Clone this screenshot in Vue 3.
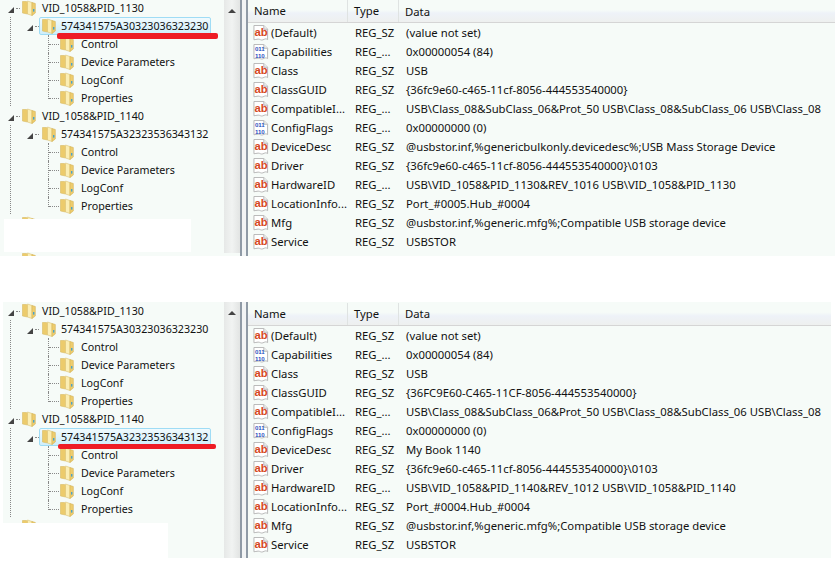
<script setup>
const panels = [
  {
    cls: 'first',
    tree: [
      { d: 0, t: 'VID_1058&PID_1130', arrow: true },
      { d: 1, t: '574341575A30323036323230', arrow: true, sel: true },
      { d: 2, t: 'Control' },
      { d: 2, t: 'Device Parameters' },
      { d: 2, t: 'LogConf' },
      { d: 2, t: 'Properties', last: true },
      { d: 0, t: 'VID_1058&PID_1140', arrow: true },
      { d: 1, t: '574341575A32323536343132', arrow: true },
      { d: 2, t: 'Control' },
      { d: 2, t: 'Device Parameters' },
      { d: 2, t: 'LogConf' },
      { d: 2, t: 'Properties', last: true },
      { d: 0, t: '' },
      { d: 0, t: '' },
      { d: 0, t: '' }
    ],
    rows: [
      ['ab', '(Default)', 'REG_SZ', '(value not set)'],
      ['bin', 'Capabilities', 'REG_...', '0x00000054 (84)'],
      ['ab', 'Class', 'REG_SZ', 'USB'],
      ['ab', 'ClassGUID', 'REG_SZ', '{36fc9e60-c465-11cf-8056-444553540000}'],
      ['ab', 'CompatibleI...', 'REG_...', 'USB\\Class_08&SubClass_06&Prot_50 USB\\Class_08&SubClass_06 USB\\Class_08'],
      ['bin', 'ConfigFlags', 'REG_...', '0x00000000 (0)'],
      ['ab', 'DeviceDesc', 'REG_SZ', '@usbstor.inf,%genericbulkonly.devicedesc%;USB Mass Storage Device'],
      ['ab', 'Driver', 'REG_SZ', '{36fc9e60-c465-11cf-8056-444553540000}\\0103'],
      ['ab', 'HardwareID', 'REG_...', 'USB\\VID_1058&PID_1130&REV_1016 USB\\VID_1058&PID_1130'],
      ['ab', 'LocationInfo...', 'REG_SZ', 'Port_#0005.Hub_#0004'],
      ['ab', 'Mfg', 'REG_SZ', '@usbstor.inf,%generic.mfg%;Compatible USB storage device'],
      ['ab', 'Service', 'REG_SZ', 'USBSTOR']
    ]
  },
  {
    cls: 'second',
    tree: [
      { d: 0, t: 'VID_1058&PID_1130', arrow: true },
      { d: 1, t: '574341575A30323036323230', arrow: true },
      { d: 2, t: 'Control' },
      { d: 2, t: 'Device Parameters' },
      { d: 2, t: 'LogConf' },
      { d: 2, t: 'Properties', last: true },
      { d: 0, t: 'VID_1058&PID_1140', arrow: true },
      { d: 1, t: '574341575A32323536343132', arrow: true, sel: true },
      { d: 2, t: 'Control' },
      { d: 2, t: 'Device Parameters' },
      { d: 2, t: 'LogConf' },
      { d: 2, t: 'Properties', last: true },
      { d: 0, t: '' }
    ],
    rows: [
      ['ab', '(Default)', 'REG_SZ', '(value not set)'],
      ['bin', 'Capabilities', 'REG_...', '0x00000054 (84)'],
      ['ab', 'Class', 'REG_SZ', 'USB'],
      ['ab', 'ClassGUID', 'REG_SZ', '{36FC9E60-C465-11CF-8056-444553540000}'],
      ['ab', 'CompatibleI...', 'REG_...', 'USB\\Class_08&SubClass_06&Prot_50 USB\\Class_08&SubClass_06 USB\\Class_08'],
      ['bin', 'ConfigFlags', 'REG_...', '0x00000000 (0)'],
      ['ab', 'DeviceDesc', 'REG_SZ', 'My Book 1140'],
      ['ab', 'Driver', 'REG_SZ', '{36fc9e60-c465-11cf-8056-444553540000}\\0103'],
      ['ab', 'HardwareID', 'REG_...', 'USB\\VID_1058&PID_1140&REV_1012 USB\\VID_1058&PID_1140'],
      ['ab', 'LocationInfo...', 'REG_SZ', 'Port_#0004.Hub_#0004'],
      ['ab', 'Mfg', 'REG_SZ', '@usbstor.inf,%generic.mfg%;Compatible USB storage device'],
      ['ab', 'Service', 'REG_SZ', 'USBSTOR']
    ]
  }
]
</script>

<template>
  <div class="page">
    <section v-for="p in panels" :key="p.cls" class="panel" :class="p.cls">
      <div class="tree">
        <div v-for="(n, i) in p.tree" :key="i" class="node" :class="['d' + n.d, { last: n.last }]">
          <span v-if="n.arrow" class="arrow"></span>
          <span class="item" :class="{ sel: n.sel }">
            <svg class="folder" width="14" height="16" viewBox="0 0 14 16">
              <path d="M.5 1.500h4l1 1v11.500l-5-1z" fill="#eccb6c" stroke="#d8bb63" stroke-width=".6" />
              <path d="M5.500 1 10 2.500v13l-4.500-1.500z" fill="#fbeeb4" stroke="#dcc170" stroke-width=".6" />
              <path d="M10 2.500l3.300 1v9.500l-3.300 2.500z" fill="#eecd6e" stroke="#d3b254" stroke-width=".6" />
              <rect x="11" y="9" width="1.400" height="2.600" fill="#46a3cc" />
            </svg>
            <span class="label">{{ n.t }}</span>
          </span>
          <i v-if="n.sel" class="redline"></i>
        </div>
        <div class="blank"></div>
      </div>
      <div class="scroll"><span class="up"></span></div>
      <div class="split"></div>
      <div class="list">
        <div class="head">
          <span class="c1">Name</span><span class="c2">Type</span><span class="c3">Data</span>
        </div>
        <div v-for="r in p.rows" :key="r[1]" class="row">
          <svg class="regicon" width="16" height="16" viewBox="0 0 16 17">
            <path d="M.5.5h10.500l4 4v11c-2-1.500-3-.5-5 .3-2 .7-3-.8-5-.8-2 0-3 .7-4.500 .7z" fill="#fff" stroke="#b4b4b4" />
            <path d="M11 .5v4h4" fill="#eee" stroke="#b4b4b4" />
            <text v-if="r[0] === 'ab'" x="1" y="11.500" class="abt">ab</text>
            <template v-else>
              <text x="1.500" y="7" class="bint">011</text>
              <text x="1.500" y="14.500" class="bint">110</text>
            </template>
          </svg>
          <span class="c1 n">{{ r[1] }}</span><span class="c2">{{ r[2] }}</span><span class="c3">{{ r[3] }}</span>
        </div>
      </div>
    </section>
  </div>
</template>

<style>
html, body { margin: 0; background: #fff; }
</style>

<style scoped>
.page {
  width: 835px;
  height: 574px;
  overflow: hidden;
  font-family: "Noto Sans", "Open Sans", sans-serif;
  font-size: 11.300px;
  color: #111;
}
.panel {
  display: flex;
  background: #f6fbf8;
  height: 256px;
  overflow: hidden;
}
.panel.second {
  margin: 46px 4px 0 3px;
}
.tree {
  width: 224px;
  flex: none;
  position: relative;
  overflow: hidden;
  font-size: 10.700px;
}
.second .tree { width: 221px; }
.first .node:first-child { margin-top: -1px; }
.node {
  height: 18px;
  display: flex;
  align-items: center;
  position: relative;
}
.d0 { padding-left: 21px; }
.d1 { padding-left: 39px; }
.d2 { padding-left: 59px; }
.second .d0 { padding-left: 18px; }
.second .d1 { padding-left: 36px; }
.second .d2 { padding-left: 56px; }
.d1, .d2 {
  background-image: repeating-linear-gradient(#888 0 1px, transparent 1px 2px);
  background-repeat: no-repeat;
  background-size: 1px 100%;
  background-position: 10px 0;
}
.second .d1, .second .d2 { background-position: 7px 0; }
.item {
  display: flex;
  align-items: center;
  height: 16px;
  box-sizing: border-box;
  border: 1px solid transparent;
  border-radius: 2px;
  white-space: nowrap;
}
.folder { flex: none; }
.d0 .label { margin-left: 6px; }
.d1 .label { margin-left: 5px; }
.d2 .label { margin-left: 7px; }
.d1 .item { padding: 0 4px 0 2px; width: 172px; height: 18px; }
.sel {
  border-color: #9fdcf5 !important;
  background: linear-gradient(#f0fafe, #cfeefa);
}
.arrow {
  position: absolute;
  width: 0;
  height: 0;
  border-style: solid;
  border-width: 0 0 6px 6px;
  border-color: transparent transparent #444 transparent;
  top: 8px;
}
.d0 .arrow { left: 8px; }
.d1 .arrow { left: 27px; }
.second .d0 .arrow { left: 5px; }
.second .d1 .arrow { left: 24px; }
.d0::before, .d1::before, .d2::before {
  content: "";
  position: absolute;
  border-bottom: 1px dotted #888;
  top: 9px;
  height: 0;
}
.d0::before { left: 16px; width: 4px; }
.d1::before { left: 35px; width: 4px; }
.d2::before { left: 49px; width: 10px; }
.second .d0::before { left: 13px; }
.second .d1::before { left: 32px; }
.second .d2::before { left: 46px; }
.d2::after {
  content: "";
  position: absolute;
  left: 48px;
  top: 0;
  height: 10px;
  border-left: 1px dotted #888;
}
.d2:not(.last)::after { height: 18px; }
.second .d2::after { left: 45px; }
.redline {
  position: absolute;
  height: 5px;
  background: #ee1c25;
  border-radius: 2px;
  z-index: 2;
  top: 16px;
}
.first .redline { left: 57px; width: 161px; height: 6px; }
.second .redline { left: 55px; width: 158px; }
.blank {
  position: absolute;
  background: #fff;
  z-index: 3;
}
.first .blank { left: 4px; top: 219px; width: 187px; height: 33px; }
.second .blank { left: -3px; top: 221px; width: 168px; height: 35px; }
.scroll {
  width: 16px;
  flex: none;
  background: linear-gradient(90deg, #e6e8e7, #f1f3f2 50%, #e2e4e3);
  display: flex;
  justify-content: center;
  padding-top: 9px;
  box-sizing: border-box;
}
.first .scroll { border-bottom: 3px solid #f6fbf8; }
.up {
  width: 0;
  height: 0;
  border-style: solid;
  border-width: 0 4px 4px;
  border-color: transparent transparent #444;
}
.split {
  width: 4px;
  flex: none;
  border-left: 2px solid #8f9aa6;
  border-right: 2px solid #8f9aa6;
  background: #f2f4f5;
}
.list {
  flex: 1;
  min-width: 0;
  overflow: hidden;
}
.head {
  display: flex;
  align-items: center;
  height: 23px;
  padding-left: 6px;
  box-sizing: border-box;
  border-bottom: 1px solid #d5d5d5;
  background: linear-gradient(#f6fbf8 45%, #eef2f8 60%, #eef0ef);
}
.second .head { height: 24px; }
.head .c1, .head .c2 { border-right: 1px solid #dfe3e2; line-height: 22px; }
.head .c1 { width: 93px; }
.head .c2 { width: 44px; padding-left: 6px; }
.head .c3 { padding-left: 6px; }
.row {
  display: flex;
  align-items: center;
  height: 19px;
  padding-left: 5px;
  white-space: nowrap;
}
.regicon { flex: none; margin-right: 2px; }
.abt {
  font: 700 12px "Liberation Sans", sans-serif;
  fill: #d6481f;
}
.bint {
  font: 700 6.500px "Liberation Sans", sans-serif;
  fill: #2a4fc0;
}
.row .c1 { width: 84px; }
.row .c2 { width: 51px; }
</style>
